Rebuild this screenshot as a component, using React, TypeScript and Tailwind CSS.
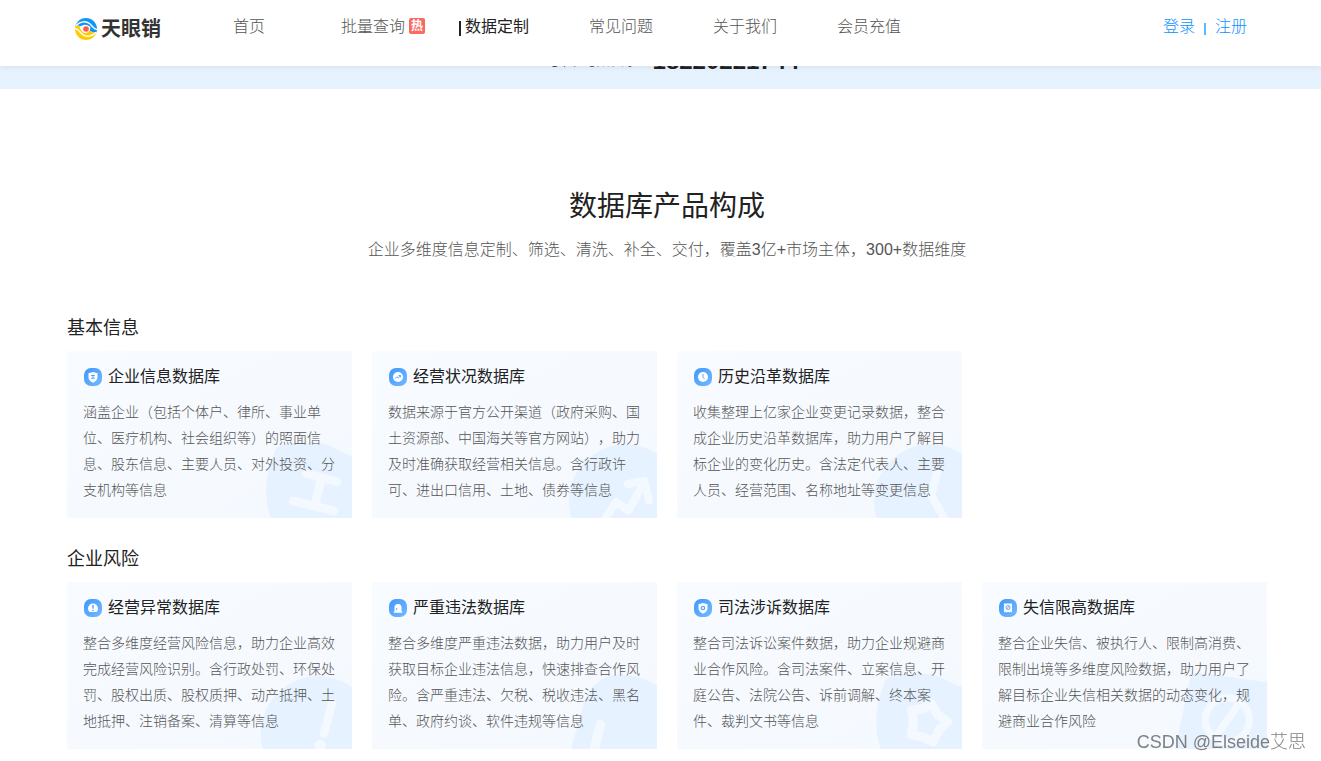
import React from 'react';

type IconName = 'company' | 'trend' | 'clock' | 'warning' | 'alarm' | 'justice' | 'limit';

interface Database {
  icon: IconName;
  title: string;
  text: string;
}

interface Group {
  title: string;
  items: Database[];
}

const groups: Group[] = [
  {
    title: '基本信息',
    items: [
      {
        icon: 'company',
        title: '企业信息数据库',
        text: '涵盖企业（包括个体户、律所、事业单位、医疗机构、社会组织等）的照面信息、股东信息、主要人员、对外投资、分支机构等信息',
      },
      {
        icon: 'trend',
        title: '经营状况数据库',
        text: '数据来源于官方公开渠道（政府采购、国土资源部、中国海关等官方网站），助力及时准确获取经营相关信息。含行政许可、进出口信用、土地、债券等信息',
      },
      {
        icon: 'clock',
        title: '历史沿革数据库',
        text: '收集整理上亿家企业变更记录数据，整合成企业历史沿革数据库，助力用户了解目标企业的变化历史。含法定代表人、主要人员、经营范围、名称地址等变更信息',
      },
    ],
  },
  {
    title: '企业风险',
    items: [
      {
        icon: 'warning',
        title: '经营异常数据库',
        text: '整合多维度经营风险信息，助力企业高效完成经营风险识别。含行政处罚、环保处罚、股权出质、股权质押、动产抵押、土地抵押、注销备案、清算等信息',
      },
      {
        icon: 'alarm',
        title: '严重违法数据库',
        text: '整合多维度严重违法数据，助力用户及时获取目标企业违法信息，快速排查合作风险。含严重违法、欠税、税收违法、黑名单、政府约谈、软件违规等信息',
      },
      {
        icon: 'justice',
        title: '司法涉诉数据库',
        text: '整合司法诉讼案件数据，助力企业规避商业合作风险。含司法案件、立案信息、开庭公告、法院公告、诉前调解、终本案件、裁判文书等信息',
      },
      {
        icon: 'limit',
        title: '失信限高数据库',
        text: '整合企业失信、被执行人、限制高消费、限制出境等多维度风险数据，助力用户了解目标企业失信相关数据的动态变化，规避商业合作风险',
      },
    ],
  },
];

const navItems = [
  { label: '首页' },
  { label: '批量查询', hot: true },
  { label: '数据定制', active: true },
  { label: '常见问题' },
  { label: '关于我们' },
  { label: '会员充值' },
];

const BLUE = '#58a8ff';

// White glyph inside the small blue badge
const glyphs: Record<IconName, React.ReactNode> = {
  company: (
    <>
      <path d="M9 4l4.500 1.300v4.200c0 2.300-2 4-4.500 5.200-2.500-1.200-4.500-2.900-4.500-5.200V5.300z" fill="#fff" />
      <path d="M7 7.500h4M7 10.200h4M9 7.500v2.700" stroke={BLUE} />
    </>
  ),
  trend: (
    <>
      <circle cx="9" cy="9" r="5" fill="#fff" />
      <path d="M6.300 10.500l1.700-1.700 1.300 1 2.200-2M9.600 7.500h2v1.800" stroke={BLUE} />
    </>
  ),
  clock: (
    <>
      <circle cx="9" cy="9" r="5" fill="#fff" />
      <path d="M9 6v3.300l1.500 1.700" stroke={BLUE} />
    </>
  ),
  warning: (
    <>
      <path d="M5.500 13A5 5 0 1 1 12.500 13z" fill="#fff" />
      <path d="M9 6v3.500M9 10.800v1.200" stroke={BLUE} strokeWidth="1.500" />
    </>
  ),
  alarm: (
    <>
      <path d="M5.500 12.500V8.500a3.500 3.500 0 0 1 7 0v4h.8v1.200H4.700v-1.200z" fill="#fff" />
      <path d="M7.700 9v2" stroke={BLUE} />
    </>
  ),
  justice: (
    <>
      <path d="M9 4l4.500 1.300v4.200c0 2.300-2 4-4.500 5.200-2.500-1.200-4.500-2.900-4.500-5.200V5.300z" fill="#fff" />
      <circle cx="9" cy="9" r="1.700" fill="none" stroke={BLUE} strokeWidth="1.300" />
    </>
  ),
  limit: (
    <>
      <path d="M5 4.500h8v9l-1.500-.8-1.200.8-1.300-.8-1.300.8-1.200-.8-1.500.8z" fill="#fff" />
      <circle cx="9" cy="8.500" r="2" fill="none" stroke={BLUE} />
      <path d="M10.200 7.200L7.800 9.800" stroke={BLUE} />
    </>
  ),
};

const SHIELD = 'M32 234C10 170 16 100 44 34C50 18 66 14 90 11C140 5 190 7 216 20C240 33 258 42 276 48V234Z';
const LIGHT = '#f4f9ff';

// Large tilted version of the glyph in the card's corner
const watermarks: Record<IconName, React.ReactNode> = {
  company: (
    <>
      <path d={SHIELD} />
      <path d="M138 101L230 125M100 183L222 213M184 114L164 198" fill="none" stroke={LIGHT} strokeWidth="26" />
    </>
  ),
  trend: (
    <>
      <circle cx="182" cy="183" r="170" />
      <path d="M115 245L154 186L190 212L232 138M188 132L238 123L252 182" fill="none" stroke={LIGHT} strokeWidth="24" />
    </>
  ),
  clock: (
    <>
      <circle cx="182" cy="183" r="170" />
      <path d="M202 95L184 166L228 245" fill="none" stroke={LIGHT} strokeWidth="24" />
    </>
  ),
  warning: (
    <>
      <circle cx="175" cy="189" r="173" />
      <path d="M216 95L192 188" fill="none" stroke={LIGHT} strokeWidth="25" />
      <circle cx="181" cy="223" r="17" fill={LIGHT} />
    </>
  ),
  alarm: (
    <>
      <path d="M18 234L60 88C76 34 130 6 180 12C220 15 250 28 276 44V234Z" />
      <path d="M106 160L84 250" fill="none" stroke={LIGHT} strokeWidth="28" />
    </>
  ),
  justice: (
    <>
      <path d={SHIELD} />
      <path d="M125 118L158 114L184 98L202 130L232 152L208 176L190 212L158 198L124 192L130 154Z" fill="none" stroke={LIGHT} strokeWidth="28" />
    </>
  ),
  limit: (
    <>
      <path d="M0 234L46 22Q52 4 72 6L276 34V234Z" />
      <circle cx="157" cy="147" r="66" fill="none" stroke={LIGHT} strokeWidth="22" />
      <path d="M194 94L120 200" stroke={LIGHT} strokeWidth="22" />
    </>
  ),
};

const Logo: React.FC = () => (
  <a href="#" className="flex items-center gap-1 text-[20px] leading-7 font-bold text-[#333]">
    <svg width="22" height="22" viewBox="0 0 22 22" fill="none">
      <clipPath id="logo-disc">
        <circle cx="11" cy="11" r="11" />
      </clipPath>
      <g clipPath="url(#logo-disc)">
        <path d="M0 8C3 7 6 8 8 10L14 12C16 14 19 15 22 14V0H0Z" fill="#1296f5" />
        <path d="M0 8C3 7 6 8 8 10L14 12C16 14 19 15 22 14V22H0Z" fill="#ffcb05" />
        <path d="M1 7.500C5 3.500 10.500 2.500 14.500 5.500C17.500 8 18 11 22.500 11.500" stroke="#fff" strokeWidth="1.400" />
        <path d="M21 14.500C17 18.500 11.500 19.500 7.500 16.500C4.500 14 4 11-.5 10.500" stroke="#fff" strokeWidth="1.400" />
        <path d="M4.500 9.500C8 5.500 13 6.200 15.500 9.500C14.500 16 8.500 16.500 6.500 12.500Z" fill="#fff" />
      </g>
      <circle cx="11" cy="11" r="2.800" fill="#ff5a4f" />
    </svg>
    天眼销
  </a>
);

const Header: React.FC = () => (
  <header className="sticky top-0 z-10 bg-white shadow-[0_1px_6px_rgba(0,0,0,0.08)]">
    <div className="flex h-[66px] items-start pt-3 pr-[74px] pl-[75px]">
      <div className="w-[142px] pt-[3px]">
        <Logo />
      </div>
      <nav className="flex flex-1 gap-[60px] pt-[3px] text-base leading-6 text-[#555]">
        {navItems.map((item) => (
          <a
            key={item.label}
            href="#"
            className={item.active ? 'relative w-16 text-center font-normal text-[#222]' : 'relative w-16 text-center'}
          >
            {item.active && <span className="absolute top-[6px] -left-[6px] h-[15px] w-[2px] bg-[#222]" />}
            {item.label}
            {item.hot && (
              <span className="absolute top-[3px] -right-5 size-4 rounded-xs bg-[#fb6a61] text-center text-xs leading-4 font-bold text-white">
                热
              </span>
            )}
          </a>
        ))}
      </nav>
      <div className="flex items-center gap-[9px] pt-[3px] text-base leading-6 text-[#0a92ff]">
        <a href="#">登录</a>
        <span className="mt-1 h-3 w-[2px] bg-[#5cb8ff]" />
        <a href="#">注册</a>
      </div>
    </div>
  </header>
);

const Card: React.FC<{ item: Database }> = ({ item }) => (
  <article className="relative overflow-hidden bg-linear-to-br from-[#f8fbff] to-[#f4f9ff] px-4 pt-3 pb-[15px]">
    <svg className="absolute right-0 bottom-0" width="92" height="78" viewBox="0 0 276 234" fill="#e6f2ff" strokeLinecap="round" strokeLinejoin="round">
      {watermarks[item.icon]}
    </svg>
    <div className="relative">
      <h4 className="flex items-center gap-[6px] pl-px text-base leading-7 font-normal text-[#222]">
        <svg width="18" height="18" viewBox="0 0 18 18" fill="none">
          <linearGradient id={`badge-${item.icon}`} x1="0" y1="0" x2="1" y2="1">
            <stop stopColor="#3f98fb" />
            <stop offset="1" stopColor="#74b9ff" />
          </linearGradient>
          <rect width="18" height="18" rx="7" fill={`url(#badge-${item.icon})`} />
          {glyphs[item.icon]}
        </svg>
        {item.title}
      </h4>
      <p className="mt-2 text-sm leading-[26px] text-[#555]">{item.text}</p>
    </div>
  </article>
);

export default function App() {
  return (
    <div className="min-h-screen bg-white font-['Liberation_Sans','Noto_Sans_CJK_SC',sans-serif] font-light [text-spacing-trim:space-all]">
      <Header />
      {/* hotline strip, scrolled under the header */}
      <section className="-mt-6 flex h-[47px] items-start justify-center gap-5 bg-[#e7f2ff] pt-[5px] pl-[21px] text-[#222]">
        <span className="text-lg leading-6 text-[#444]">可咨询热线</span>
        <strong className="text-2xl leading-7 font-bold">18220221744</strong>
      </section>
      <main className="pt-[98px] pr-[54px] pb-3 pl-[67px]">
        <div className="text-center">
          <h2 className="text-[28px] leading-10 font-normal text-[#222]">数据库产品构成</h2>
          <p className="mt-[11px] text-base leading-6 text-[#555]">企业多维度信息定制、筛选、清洗、补全、交付，覆盖3亿+市场主体，300+数据维度</p>
        </div>
        <div className="mt-[52px] flex flex-col gap-[27px]">
          {groups.map((group) => (
            <section key={group.title}>
              <h3 className="text-lg leading-7 font-normal text-[#222]">{group.title}</h3>
              <div className="mt-[9px] grid grid-cols-4 gap-5">
                {group.items.map((item) => (
                  <Card key={item.title} item={item} />
                ))}
              </div>
            </section>
          ))}
        </div>
      </main>
      <div className="fixed right-[15px] bottom-[5px] text-lg leading-7 text-[#808080]">CSDN @Elseide艾思</div>
    </div>
  );
}
